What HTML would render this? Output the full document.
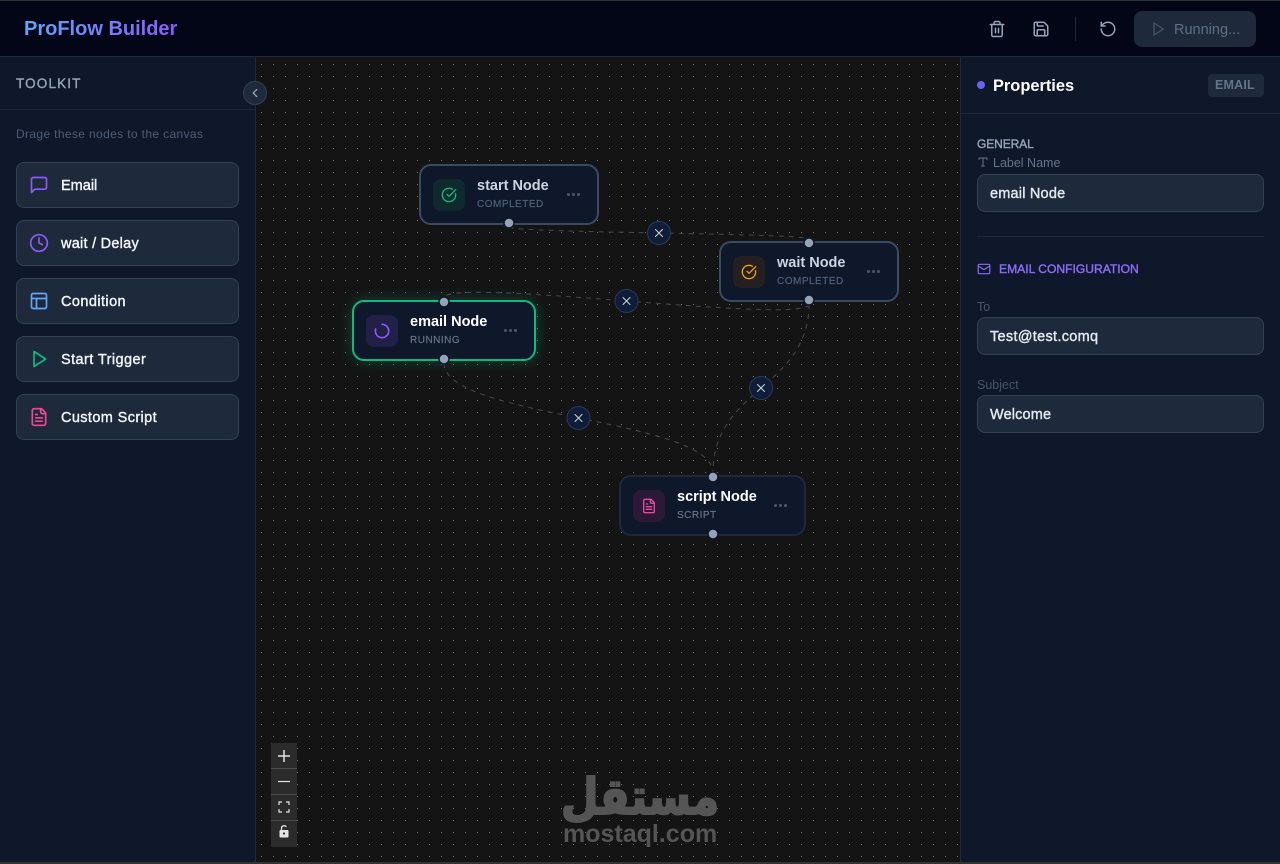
<!DOCTYPE html>
<html lang="en"><head><meta charset="utf-8"><title>ProFlow Builder</title>
<style>
*{box-sizing:border-box;margin:0;padding:0}
html,body{width:1280px;height:864px;overflow:hidden;background:#141414;font-family:"Liberation Sans",sans-serif}
.a{position:absolute;white-space:nowrap;line-height:1}
.m{-webkit-text-stroke:.4px currentColor}
#side{position:absolute;left:0;top:57px;width:256px;height:805px;background:#0f172a;border-right:1px solid #1e293b}
#right{position:absolute;left:960px;top:57px;width:320px;height:805px;background:#0f172a;border-left:1px solid #1e293b}
#head{position:absolute;left:0;top:1px;width:1280px;height:56px;background:#020617;border-bottom:1px solid #1e293b}
.btn{position:absolute;left:16px;width:223px;height:46px;background:#1e293b;border:1px solid #334155;border-radius:8px}
.inp{position:absolute;left:977px;width:287px;height:38px;background:#1e293b;border:1px solid #334155;border-radius:8px}
.node{position:absolute;background:#0f172a;border:2px solid #3b4a63;border-radius:12px;height:61px}
.ib{position:absolute;left:12px;top:13px;width:32px;height:32px;border-radius:8px}
.t{position:absolute;left:56px;top:13px;font-size:14.5px;font-weight:bold;line-height:1;white-space:nowrap}
.s{position:absolute;left:56px;top:34px;font-size:10px;letter-spacing:.5px;color:#64748b;line-height:1;white-space:nowrap;-webkit-text-stroke:.2px currentColor}
.mn{position:absolute;top:27px;display:flex;gap:2.5px}
.mn i{display:block;width:2.5px;height:2.5px;border-radius:50%;background:#475569}
svg{position:absolute;overflow:visible}
.ic{fill:none;stroke-linecap:round;stroke-linejoin:round}
.z{position:absolute;left:271px;width:26px;height:26px;background:#2b2b2b;border-bottom:1px solid #4a4a4a}
</style></head><body>
<div class="a" style="left:0;top:0;width:1280px;height:1px;background:#333"></div>
<div id="head"></div>
<div class="a" style="left:24px;top:19px;font-size:20px;font-weight:bold;background:linear-gradient(90deg,#60a5fa,#8b5cf6);-webkit-background-clip:text;background-clip:text;color:transparent;height:22px">ProFlow Builder</div>

<svg class="ic" style="left:988px;top:20px" width="18" height="18" viewBox="0 0 24 24" stroke="#94a3b8" stroke-width="2"><path d="M3 6h18M19 6v14a2 2 0 0 1-2 2H7a2 2 0 0 1-2-2V6M8 6V4a2 2 0 0 1 2-2h4a2 2 0 0 1 2 2v2M10 11v6M14 11v6"/></svg>
<svg class="ic" style="left:1032px;top:20px" width="18" height="18" viewBox="0 0 24 24" stroke="#94a3b8" stroke-width="2"><path d="M15.2 3a2 2 0 0 1 1.4.6l3.8 3.8a2 2 0 0 1 .6 1.4V19a2 2 0 0 1-2 2H5a2 2 0 0 1-2-2V5a2 2 0 0 1 2-2z"/><path d="M17 21v-7a1 1 0 0 0-1-1H8a1 1 0 0 0-1 1v7M7 3v4a1 1 0 0 0 1 1h7"/></svg>
<div class="a" style="left:1075px;top:17px;width:1px;height:24px;background:#1e293b"></div>
<svg class="ic" style="left:1099px;top:20px" width="18" height="18" viewBox="0 0 24 24" stroke="#94a3b8" stroke-width="2"><path d="M3 12a9 9 0 1 0 9-9 9.75 9.75 0 0 0-6.74 2.74L3 8"/><path d="M3 3v5h5"/></svg>
<div class="a" style="left:1134px;top:11px;width:122px;height:36px;background:#1e293b;border-radius:8px"></div>
<svg class="ic" style="left:1150px;top:21px" width="16" height="16" viewBox="0 0 24 24" stroke="#475569" stroke-width="2"><path d="M6 3v18l14-9z"/></svg>
<div class="a" style="left:1174px;top:23px;font-size:14.5px;color:#5f6f88">Running...</div>

<svg style="left:256px;top:57px" width="704" height="805"><defs><pattern id="d" x="5" y="7" width="12" height="12" patternUnits="userSpaceOnUse"><rect width="1" height="1" fill="#6e6e6e"/></pattern></defs><rect width="704" height="805" fill="#141414"/><rect width="704" height="805" fill="url(#d)"/></svg>
<svg style="left:0;top:0" width="1280" height="864" fill="none" stroke="#484848" stroke-width="1" stroke-dasharray="5 5">
<path d="M509 227C509 233 809 233 809 239"/>
<path d="M809 304C809 326 444 276 444 298"/>
<path d="M809 304C809 388 713 388 713 473"/>
<path d="M444 363C444 418 713 418 713 473"/>
</svg>

<div class="node" style="left:419px;top:164px;width:180px">
 <div class="ib" style="background:#0f2a2e"></div>
 <svg class="ic" style="left:20px;top:21px" width="16" height="16" viewBox="0 0 24 24" stroke="#10b981" stroke-width="2"><path d="M21.8 10A10 10 0 1 1 17 3.3"/><path d="M9 11l3 3L22 4"/></svg>
 <div class="t" style="color:#cbd5e1">start Node</div><div class="s" style="color:#4f5f7c">COMPLETED</div>
 <div class="mn" style="left:146px"><i></i><i></i><i></i></div>
</div>
<div class="node" style="left:719px;top:241px;width:180px">
 <div class="ib" style="background:#241f20"></div>
 <svg class="ic" style="left:20px;top:21px" width="16" height="16" viewBox="0 0 24 24" stroke="#f59e0b" stroke-width="2"><path d="M21.8 10A10 10 0 1 1 17 3.3"/><path d="M9 11l3 3L22 4"/></svg>
 <div class="t" style="color:#cbd5e1">wait Node</div><div class="s" style="color:#4f5f7c">COMPLETED</div>
 <div class="mn" style="left:146px"><i></i><i></i><i></i></div>
</div>
<div class="node" style="left:352px;top:300px;width:184px;border-color:#10b981;box-shadow:0 0 15px rgba(16,185,129,.3)">
 <div class="ib" style="background:#221f48"></div>
 <svg class="ic" style="left:20px;top:21px" width="16" height="16" viewBox="0 0 24 24" stroke="#8b5cf6" stroke-width="2.4"><path d="M12 2a10 10 0 1 1-9.500 7"/></svg>
 <div class="t" style="color:#fff">email Node</div><div class="s">RUNNING</div>
 <div class="mn" style="left:150px"><i></i><i></i><i></i></div>
</div>
<div class="node" style="left:619px;top:475px;width:187px;border-color:#1e293b">
 <div class="ib" style="background:#2a1a38"></div>
 <svg class="ic" style="left:20px;top:21px" width="16" height="16" viewBox="0 0 24 24" stroke="#ec4899" stroke-width="2"><path d="M15 2H6a2 2 0 0 0-2 2v16a2 2 0 0 0 2 2h12a2 2 0 0 0 2-2V7z"/><path d="M14 2v4a2 2 0 0 0 2 2h4M10 9H8M16 13H8M16 17H8"/></svg>
 <div class="t" style="color:#fff">script Node</div><div class="s">SCRIPT</div>
 <div class="mn" style="left:153px"><i></i><i></i><i></i></div>
</div>

<svg style="left:0;top:0" width="1280" height="864">
<g fill="#94a3b8" stroke="#0f172a" stroke-width="1.5">
<circle cx="509" cy="223" r="5"/><circle cx="809" cy="243" r="5"/><circle cx="809" cy="300" r="5"/>
<circle cx="444" cy="302" r="5"/><circle cx="444" cy="359" r="5"/><circle cx="713" cy="477" r="5"/><circle cx="713" cy="534" r="5"/>
</g>
<g fill="#0f1d38" stroke="#263b5e" stroke-width="1">
<circle cx="659" cy="233" r="11.5"/><circle cx="626.500" cy="301" r="11.5"/><circle cx="761" cy="388" r="11.5"/><circle cx="578.500" cy="418" r="11.5"/>
</g>
<g stroke="#cbd5e1" stroke-width="1" stroke-linecap="round" fill="none">
<path d="M655.500 229.500l7 7m0-7l-7 7M623 297.500l7 7m0-7l-7 7M757.500 384.500l7 7m0-7l-7 7M575 414.500l7 7m0-7l-7 7"/>
</g>
</svg>

<div id="side"></div>
<div class="a" style="left:0;top:109px;width:255px;height:1px;background:#1e293b"></div>
<div class="a m" style="left:16px;top:77px;font-size:13.500px;color:#94a3b8;letter-spacing:1.15px">TOOLKIT</div>
<div class="a" style="left:16px;top:128px;font-size:12px;color:#4d5d75;letter-spacing:.36px">Drage these nodes to the canvas</div>
<div class="btn" style="top:162px"></div><div class="btn" style="top:220px"></div><div class="btn" style="top:278px"></div><div class="btn" style="top:336px"></div><div class="btn" style="top:394px"></div>
<svg class="ic" style="left:29px;top:175px" width="20" height="20" viewBox="0 0 24 24" stroke="#8b5cf6" stroke-width="2"><path d="M21 15a2 2 0 0 1-2 2H7l-4 4V5a2 2 0 0 1 2-2h14a2 2 0 0 1 2 2z"/></svg>
<svg class="ic" style="left:29px;top:233px" width="20" height="20" viewBox="0 0 24 24" stroke="#8b5cf6" stroke-width="2"><circle cx="12" cy="12" r="10"/><path d="M12 6v6l4 2"/></svg>
<svg class="ic" style="left:29px;top:291px" width="20" height="20" viewBox="0 0 24 24" stroke="#60a5fa" stroke-width="2"><rect x="3" y="3" width="18" height="18" rx="2"/><path d="M3 9h18M9 21V9"/></svg>
<svg class="ic" style="left:29px;top:349px" width="20" height="20" viewBox="0 0 24 24" stroke="#10b981" stroke-width="2"><path d="M6 3v18l14-9z"/></svg>
<svg class="ic" style="left:29px;top:407px" width="20" height="20" viewBox="0 0 24 24" stroke="#ec4899" stroke-width="2"><path d="M15 2H6a2 2 0 0 0-2 2v16a2 2 0 0 0 2 2h12a2 2 0 0 0 2-2V7z"/><path d="M14 2v4a2 2 0 0 0 2 2h4M10 9H8M16 13H8M16 17H8"/></svg>
<div class="a m" style="left:61px;top:179px;font-size:14.500px;color:#f1f5f9">Email</div>
<div class="a m" style="left:61px;top:237px;font-size:14.500px;color:#f1f5f9;letter-spacing:.25px">wait / Delay</div>
<div class="a m" style="left:61px;top:295px;font-size:14.500px;color:#f1f5f9;letter-spacing:.42px">Condition</div>
<div class="a m" style="left:61px;top:353px;font-size:14.500px;color:#f1f5f9;letter-spacing:.42px">Start Trigger</div>
<div class="a m" style="left:61px;top:411px;font-size:14.500px;color:#f1f5f9;letter-spacing:.38px">Custom Script</div>

<div class="a" style="left:243px;top:81px;width:24px;height:24px;border-radius:50%;background:#1e293b;border:1px solid #334155"></div>
<svg class="ic" style="left:248px;top:86px" width="14" height="14" viewBox="0 0 24 24" stroke="#94a3b8" stroke-width="2.2"><path d="M15 18l-6-6 6-6"/></svg>

<div class="z" style="top:743px"></div><div class="z" style="top:769px"></div><div class="z" style="top:795px"></div><div class="z" style="top:821px;border:0"></div>
<svg style="left:271px;top:743px" width="26" height="104" fill="none" stroke="#e5e5e5">
<path d="M7 13h12M13 7v12" stroke-width="1.500"/><path d="M7 38.500h12" stroke-width="1.200"/>
<path d="M8 62v-3h3M15 59h3v3M18 66v3h-3M11 69H8v-3" stroke-width="1.200"/>
<rect x="8.500" y="87" width="9" height="7.500" rx="1" fill="#e5e5e5" stroke="none"/><path d="M10.500 87v-2a2.500 2.500 0 0 1 4.700-1" stroke-width="1.300"/><circle cx="13" cy="90.500" r="1.100" fill="#2b2b2b" stroke="none"/>
</svg>

<div class="a" style="left:561px;top:762px;transform:scaleX(.865);transform-origin:left top;font-family:'DejaVu Sans',sans-serif;font-weight:bold;font-size:50px;line-height:70px;color:#555;-webkit-text-stroke:2px #555">مستقل</div>
<div class="a" style="left:563px;top:822px;font-size:25px;font-weight:bold;color:#555">mostaql.com</div>

<div id="right"></div>
<div class="a" style="left:961px;top:113px;width:319px;height:1px;background:#1e293b"></div>
<div class="a" style="left:977px;top:81px;width:8px;height:8px;border-radius:50%;background:#6366f1"></div>
<div class="a" style="left:993px;top:78px;font-size:16.400px;font-weight:bold;color:#fff">Properties</div>
<div class="a" style="left:1208px;top:74px;width:56px;height:23px;background:#1e293b;border-radius:4px"></div>
<div class="a" style="left:1215px;top:79px;font-size:12.500px;font-weight:bold;color:#64748b;letter-spacing:.2px">EMAIL</div>
<div class="a m" style="left:977px;top:138px;font-size:12px;color:#94a3b8;letter-spacing:-.1px">GENERAL</div>
<svg class="ic" style="left:977px;top:156px" width="12" height="12" viewBox="0 0 24 24" stroke="#64748b" stroke-width="2"><path d="M4 7V4h16v3M9 20h6M12 4v16"/></svg>
<div class="a" style="left:993px;top:156.500px;font-size:12.500px;color:#64748b">Label Name</div>
<div class="inp" style="top:174px"></div>
<div class="a m" style="left:990px;top:187px;font-size:14.500px;color:#e2e8f0;letter-spacing:.2px">email Node</div>
<div class="a" style="left:977px;top:236px;width:287px;height:1px;background:#1e293b"></div>
<svg class="ic" style="left:977px;top:262px" width="14" height="14" viewBox="0 0 24 24" stroke="#8b6cf6" stroke-width="2"><rect x="2" y="4" width="20" height="16" rx="2"/><path d="M22 7l-10 6L2 7"/></svg>
<div class="a m" style="left:999px;top:263px;font-size:12.100px;color:#8b6cf6">EMAIL CONFIGURATION</div>
<div class="a" style="left:977px;top:301px;font-size:12.500px;color:#475569">To</div>
<div class="inp" style="top:317px"></div>
<div class="a m" style="left:990px;top:330px;font-size:14.500px;color:#e2e8f0;letter-spacing:.3px">Test@test.comq</div>
<div class="a" style="left:977px;top:379px;font-size:12.500px;color:#475569">Subject</div>
<div class="inp" style="top:395px"></div>
<div class="a m" style="left:990px;top:408px;font-size:14.500px;color:#e2e8f0;letter-spacing:.14px">Welcome</div>
<div class="a" style="left:0;top:862px;width:1280px;height:2px;background:#333"></div>
</body></html>
